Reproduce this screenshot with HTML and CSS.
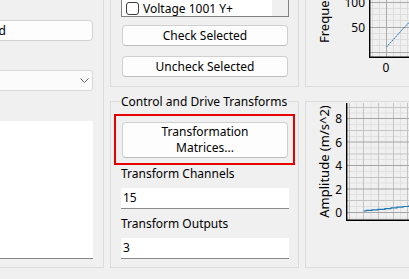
FILE: index.html
```html
<!DOCTYPE html>
<html lang="en">
<head>
    <meta charset="UTF-8">
    <meta name="viewport" content="width=device-width, initial-scale=1.0">
    <title>Control and Drive Transforms</title>
    <link rel="stylesheet" href="styles.css">
</head>
<body>
    <div class="window">
        <div class="group group-left">
            <div class="text-box">Record Selected</div>
            <div class="combo">
                <svg class="chevron" width="9" height="5" viewBox="0 0 9 5"><polyline points="0.5,0.5 4.5,4.5 8.5,0.5" fill="none" stroke="#5c5c5c" stroke-width="1"/></svg>
            </div>
            <div class="list-box"></div>
        </div>

        <div class="column column-mid">
            <div class="group group-top">
                <div class="check-list">
                    <div class="check-items">
                        <label class="check-item"><span class="check-box"></span>Voltage 1001 X+</label>
                        <label class="check-item"><span class="check-box"></span>Voltage 1001 Y+</label>
                    </div>
                    <div class="scroll-track"></div>
                </div>
                <button type="button" class="btn">Check Selected</button>
                <button type="button" class="btn btn-gap">Uncheck Selected</button>
            </div>
            <div class="group group-bottom">
                <div class="group-title">Control and Drive Transforms</div>
                <div class="highlight">
                    <button type="button" class="btn btn-tall">Transformation<br>Matrices...</button>
                </div>
                <div class="field-label">Transform Channels</div>
                <div class="field">15</div>
                <div class="field-label field-label-gap">Transform Outputs</div>
                <div class="field">3</div>
            </div>
        </div>

        <div class="column column-right">
            <div class="group group-top chart-group">
                <svg class="chart" width="118" height="125" viewBox="306 -39 118 125">
                    <g stroke="#dddddd" stroke-width="1">
                        <line x1="372.5" y1="-39" x2="372.5" y2="57"/>
                        <line x1="379.5" y1="-39" x2="379.5" y2="57"/>
                        <line x1="393.5" y1="-39" x2="393.5" y2="57"/>
                        <line x1="400.5" y1="-39" x2="400.5" y2="57"/>
                        <line x1="407.5" y1="-39" x2="407.5" y2="57"/>
                        <line x1="369" y1="8.5" x2="424" y2="8.5"/>
                        <line x1="369" y1="14.5" x2="424" y2="14.5"/>
                        <line x1="369" y1="20.5" x2="424" y2="20.5"/>
                        <line x1="369" y1="33.5" x2="424" y2="33.5"/>
                        <line x1="369" y1="39.5" x2="424" y2="39.5"/>
                        <line x1="369" y1="45.5" x2="424" y2="45.5"/>
                    </g>
                    <g stroke="#a9a9a9" stroke-width="1">
                        <line x1="386.5" y1="-39" x2="386.5" y2="57"/>
                        <line x1="369" y1="2.5" x2="424" y2="2.5"/>
                        <line x1="369" y1="27.5" x2="424" y2="27.5"/>
                        <line x1="369" y1="52.5" x2="424" y2="52.5"/>
                    </g>
                    <polyline points="386.5,47 392,41 397,35.5 402,30 409,22.5 424,6" fill="none" stroke="#1f77b4" stroke-width="1" stroke-dasharray="2 0.6"/>
                    <g stroke="#000" stroke-width="1.4">
                        <line x1="369.7" y1="-39" x2="369.7" y2="58"/>
                        <line x1="369" y1="57.3" x2="424" y2="57.3"/>
                    </g>
                    <g class="tick" text-anchor="end">
                        <text x="365" y="6.5">100</text>
                        <text x="365" y="31.5">50</text>
                    </g>
                    <text class="tick" x="386" y="71.5" text-anchor="middle">0</text>
                    <text class="axis-label" transform="translate(328.5,43) rotate(-90)">Frequency (Hz)</text>
                </svg>
            </div>
            <div class="group group-bottom chart-group">
                <svg class="chart" width="118" height="165" viewBox="306 102 118 165">
                    <g stroke="#e0e0e0" stroke-width="1">
                        <line x1="356.5" y1="103" x2="356.5" y2="220"/>
                        <line x1="371" y1="103" x2="371" y2="220"/>
                        <line x1="386" y1="103" x2="386" y2="220"/>
                        <line x1="400.5" y1="103" x2="400.5" y2="220"/>
                        <line x1="347" y1="113" x2="424" y2="113"/>
                        <line x1="347" y1="124.5" x2="424" y2="124.5"/>
                        <line x1="347" y1="136.5" x2="424" y2="136.5"/>
                        <line x1="347" y1="148" x2="424" y2="148"/>
                        <line x1="347" y1="159.5" x2="424" y2="159.5"/>
                        <line x1="347" y1="171.5" x2="424" y2="171.5"/>
                        <line x1="347" y1="183" x2="424" y2="183"/>
                        <line x1="347" y1="194.5" x2="424" y2="194.5"/>
                        <line x1="347" y1="206.5" x2="424" y2="206.5"/>
                        <line x1="347" y1="218" x2="424" y2="218"/>
                    </g>
                    <g stroke="#c4c4c4" stroke-width="1">
                        <line x1="349.5" y1="103" x2="349.5" y2="220"/>
                        <line x1="363.5" y1="103" x2="363.5" y2="220"/>
                        <line x1="378.5" y1="103" x2="378.5" y2="220"/>
                        <line x1="393.5" y1="103" x2="393.5" y2="220"/>
                        <line x1="407.5" y1="103" x2="407.5" y2="220"/>
                        <line x1="347" y1="107.5" x2="424" y2="107.5"/>
                        <line x1="347" y1="130.5" x2="424" y2="130.5"/>
                        <line x1="347" y1="154" x2="424" y2="154"/>
                        <line x1="347" y1="177.5" x2="424" y2="177.5"/>
                        <line x1="347" y1="200.5" x2="424" y2="200.5"/>
                    </g>
                    <g stroke="#a4a4a4" stroke-width="1">
                        <line x1="347" y1="118.5" x2="424" y2="118.5"/>
                        <line x1="347" y1="142" x2="424" y2="142"/>
                        <line x1="347" y1="165.5" x2="424" y2="165.5"/>
                        <line x1="347" y1="189" x2="424" y2="189"/>
                        <line x1="347" y1="212.5" x2="424" y2="212.5"/>
                    </g>
                    <polyline points="363.5,211 366,211 366,210.3 372,210.3 372,209.8 378,209.8 378,209.3 385,209.3 385,208.6 391,208.6 391,207.9 397,207.9 397,207.2 403,207.2 403,206.5 409,206.5 409,205.8 424,205" fill="none" stroke="#1f77b4" stroke-width="1.2"/>
                    <g stroke="#000" stroke-width="1.4">
                        <line x1="346.7" y1="103" x2="346.7" y2="221"/>
                        <line x1="346" y1="220.3" x2="424" y2="220.3"/>
                    </g>
                    <g class="tick" text-anchor="end">
                        <text x="342" y="123">8</text>
                        <text x="342" y="146.5">6</text>
                        <text x="342" y="170">4</text>
                        <text x="342" y="193.5">2</text>
                        <text x="342" y="217">0</text>
                    </g>
                    <text class="axis-label" transform="translate(328.5,161.5) rotate(-90)" text-anchor="middle">Amplitude (m/s^2)</text>
                </svg>
            </div>
        </div>
    </div>
</body>
</html>
```

FILE: styles.css
```css
body {
    margin: 0;
    background: #f0f0f0;
    font-family: "Noto Sans", "Open Sans", sans-serif;
    font-size: 12px;
    color: #000;
    overflow: hidden;
}
.window {
    display: flex;
    gap: 6px;
    height: 279px;
    overflow: hidden;
}
.group {
    border: 1px solid #dcdcdc;
    box-sizing: border-box;
    display: flex;
    flex-direction: column;
}
.column {
    flex: none;
    display: flex;
    flex-direction: column;
    gap: 14px;
    margin-top: -40px;
}
.column-mid {
    width: 189px;
}
.column-right {
    width: 120px;
}
.group-top {
    height: 127px;
}
.group-bottom {
    height: 167px;
}

/* left panel, mostly cut off */
.group-left {
    flex: none;
    width: 204px;
    height: 308px;
    margin: -40px 0 0 -100px;
    padding: 59px 10px 0 9px;
}
.text-box {
    height: 21px;
    box-sizing: border-box;
    border: 1px solid #d3d3d3;
    border-radius: 4px;
    background: #fdfdfd;
    padding-left: 5px;
    line-height: 19px;
    white-space: nowrap;
    overflow: hidden;
}
.combo {
    margin-top: 29px;
    height: 21px;
    box-sizing: border-box;
    border: 1px solid #d9d9d9;
    border-radius: 3px;
    background: #fbfbfb;
    display: flex;
    justify-content: flex-end;
    align-items: center;
    padding-right: 3px;
}
.chevron {
    display: block;
}
.list-box {
    margin-top: 30px;
    height: 138px;
    background: #fff;
    box-sizing: border-box;
    border-bottom: 1px solid #868686;
}

/* middle panel */
.column-mid .group {
    padding: 0 9px 9px 10px;
}
.check-list {
    height: 56px;
    box-sizing: border-box;
    border: 1px solid #828282;
    background: #fff;
    display: flex;
}
.check-items {
    flex: 1;
    display: flex;
    flex-direction: column;
    justify-content: flex-end;
}
.check-item {
    height: 16px;
    display: flex;
    align-items: center;
    gap: 4px;
    padding-left: 4px;
    white-space: nowrap;
}
.check-box {
    width: 13px;
    height: 13px;
    box-sizing: border-box;
    border: 1px solid #3c3c3c;
    border-radius: 3px;
    background: #fff;
}
.scroll-track {
    width: 16px;
    background: #f0f0f0;
}
.btn {
    display: block;
    width: 166px;
    height: 21px;
    margin: 8px 1px 0;
    padding: 0;
    box-sizing: border-box;
    border: 1px solid #d0d0d0;
    border-bottom-color: #bdbdbd;
    border-radius: 4px;
    background: #fdfdfd;
    font-family: inherit;
    font-size: 12px;
    line-height: 19px;
    color: #000;
}
.btn-gap {
    margin-top: 10px;
}
.group-title {
    align-self: flex-start;
    margin: -8px 0 0 -1px;
    padding: 0 1px;
    line-height: 16px;
    background: #f0f0f0;
}
.highlight {
    margin: 4px 0 0 -7px;
    width: 181px;
    height: 51px;
    box-sizing: border-box;
    border: 2px solid #e60000;
    padding: 6px 5px 5px 6px;
}
.btn-tall {
    height: 36px;
    margin: 0;
    line-height: 16px;
}
.field-label {
    margin-top: 1px;
    line-height: 16px;
}
.field-label-gap {
    margin-top: 7px;
}
.field {
    margin-top: 6px;
    height: 21px;
    box-sizing: border-box;
    background: #fff;
    border-bottom: 1px solid #8a8a8a;
    padding-left: 2px;
    line-height: 20px;
}

/* right panel charts */
.column-right .chart-group {
    padding: 0;
    overflow: hidden;
}
.chart {
    display: block;
}
.tick {
    font-family: "Noto Sans", sans-serif;
    font-size: 12px;
    fill: #000;
}
.axis-label {
    font-family: "Noto Sans", sans-serif;
    font-size: 13px;
    fill: #000;
}
```
